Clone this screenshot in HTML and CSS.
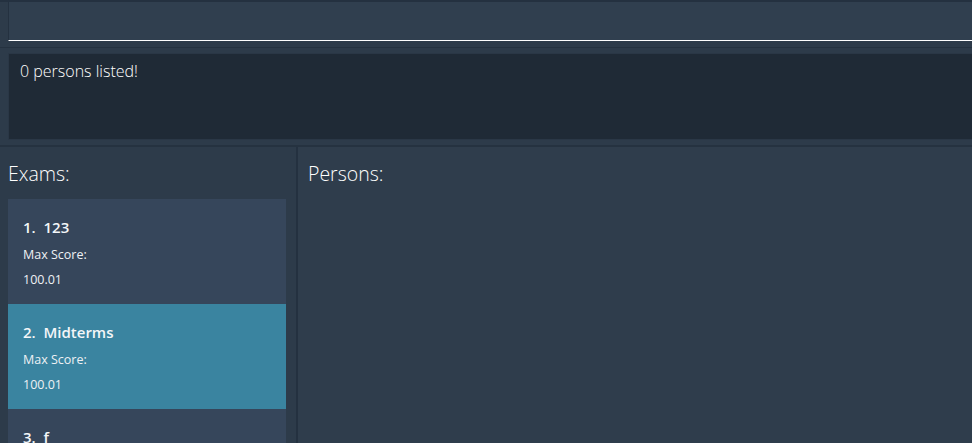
FILE: index.html
```html
<!DOCTYPE html>
<html>
<head>
<meta charset="utf-8">
<link rel="stylesheet" href="styles.css">
</head>
<body>
<div class="app">
  <div class="cmd-bar">
    <div class="cmd-box"></div>
  </div>
  <div class="sep sep-1"></div>
  <div class="result-bar">
    <div class="result-box">0 persons listed!</div>
  </div>
  <div class="sep sep-2"></div>
  <div class="main">
    <aside class="sidebar">
      <h2 class="panel-title">Exams:</h2>
      <ul class="exam-list">
        <li class="exam-card">
          <div class="exam-name">1.&nbsp; 123</div>
          <div class="exam-label">Max Score:</div>
          <div class="exam-value">100.01</div>
        </li>
        <li class="exam-card selected">
          <div class="exam-name">2.&nbsp; Midterms</div>
          <div class="exam-label">Max Score:</div>
          <div class="exam-value">100.01</div>
        </li>
        <li class="exam-card">
          <div class="exam-name">3.&nbsp; f</div>
          <div class="exam-label">Max Score:</div>
          <div class="exam-value">100.01</div>
        </li>
      </ul>
    </aside>
    <div class="divider"></div>
    <section class="persons">
      <h2 class="panel-title">Persons:</h2>
    </section>
  </div>
</div>
</body>
</html>
```

FILE: styles.css
```css
* { box-sizing: border-box; }
html, body {
  margin: 0;
  padding: 0;
  width: 972px;
  height: 443px;
  overflow: hidden;
  background: #2d3b4a;
  font-family: "Open Sans", "Noto Sans", sans-serif;
  color: #ffffff;
}
.app {
  display: flex;
  flex-direction: column;
  height: 443px;
  border-top: 2px solid #243140;
}
.cmd-bar {
  padding-left: 8px;
  height: 39px;
}
.cmd-box {
  height: 39px;
  background: #303f4f;
  border-left: 1px solid #243140;
  border-bottom: 1px solid #ffffff;
}
.sep {
  background: #253240;
  flex: none;
}
.sep-1 {
  height: 1px;
  margin-top: 6px;
}
.result-bar {
  padding: 5px 0 5px 8px;
}
.result-box {
  height: 87px;
  background: #1f2a36;
  border: 1px solid #2a3746;
  border-right: none;
  padding: 6px 11px;
  font-size: 16px;
  font-weight: 300;
  line-height: 22px;
  color: #ffffff;
}
.sep-2 {
  height: 2px;
}
.main {
  flex: 1;
  display: flex;
  min-height: 0;
}
.sidebar {
  width: 296px;
  flex: none;
  background: #2d3b4a;
  padding: 0 10px 0 8px;
  overflow: hidden;
}
.divider {
  width: 2px;
  flex: none;
  background: #243140;
}
.persons {
  flex: 1;
  background: #2f3d4c;
  padding: 0 10px;
}
.panel-title {
  margin: 0;
  padding-top: 13px;
  height: 52px;
  font-size: 19.5px;
  font-weight: 300;
  line-height: 28px;
  color: #ffffff;
}
.exam-list {
  list-style: none;
  margin: 0;
  padding: 0;
}
.exam-card {
  height: 105px;
  background: #36465b;
  padding: 17px 15px 0;
}
.exam-card.selected {
  background: #3a84a0;
}
.exam-name {
  font-size: 15px;
  font-weight: 600;
  line-height: 22px;
  color: #f4f6f8;
}
.exam-label, .exam-value {
  font-size: 12.5px;
  line-height: 16px;
  color: #eef1f4;
}
.exam-label {
  margin-top: 9px;
}
.exam-value {
  margin-top: 9px;
}
```
